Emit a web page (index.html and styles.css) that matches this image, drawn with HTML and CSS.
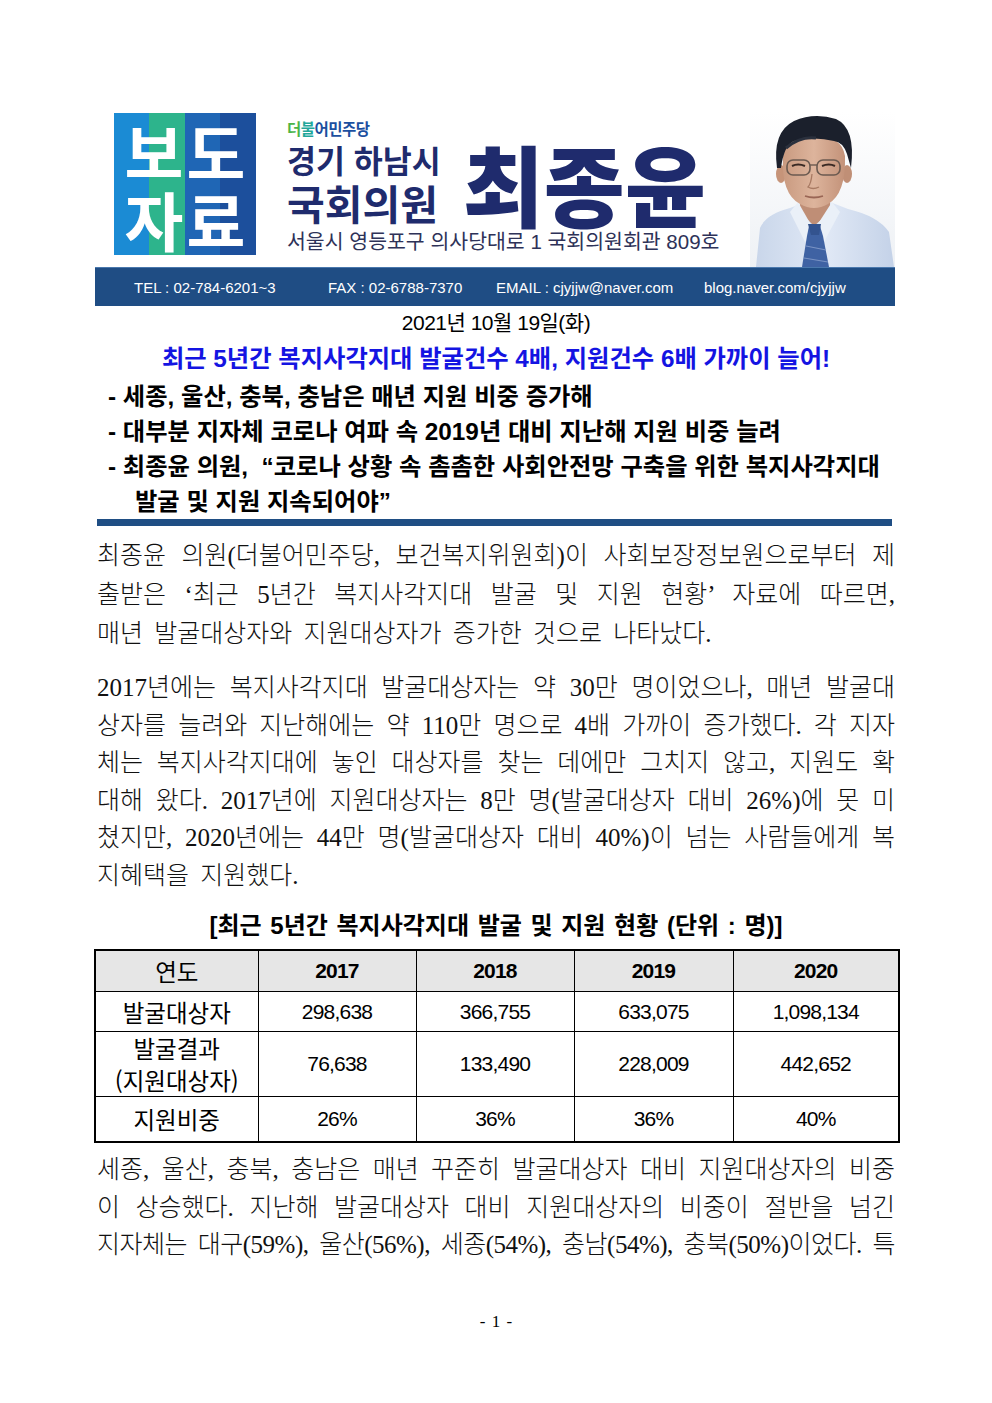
FILE: index.html
```html
<!DOCTYPE html>
<html lang="ko">
<head>
<meta charset="utf-8">
<title>보도자료 - 최종윤 의원</title>
<link rel="stylesheet" href="styles.css">
</head>
<body>
<div class="page">
  <header class="header">
    <div class="logo">
      <div class="logo-row">보도</div>
      <div class="logo-row">자료</div>
    </div>
    <div class="info">
      <div class="party"><span class="g1">더</span><span class="g2">불</span>어민주당</div>
      <div class="names">
        <div class="region">
          <div class="r1">경기 하남시</div>
          <div class="r2">국회의원</div>
        </div>
        <div class="big">최종윤</div>
      </div>
      <div class="addr">서울시 영등포구 의사당대로 1 국회의원회관 809호</div>
    </div>
    <div class="photo">
      <svg viewBox="0 0 145 155" width="145" height="155" aria-hidden="true">
        <defs>
          <linearGradient id="bg" x1="0" y1="0" x2="0" y2="1">
            <stop offset="0" stop-color="#ffffff"/>
            <stop offset="1" stop-color="#eef1f5"/>
          </linearGradient>
          <linearGradient id="shirt" x1="0" y1="0" x2="1" y2="0">
            <stop offset="0" stop-color="#c9d6ea"/>
            <stop offset="0.5" stop-color="#e1e9f6"/>
            <stop offset="1" stop-color="#c4d2e8"/>
          </linearGradient>
          <linearGradient id="face" x1="0" y1="0" x2="1" y2="0">
            <stop offset="0" stop-color="#c99a80"/>
            <stop offset="0.5" stop-color="#ddb49c"/>
            <stop offset="1" stop-color="#c39279"/>
          </linearGradient>
        </defs>
        <rect width="145" height="155" fill="url(#bg)"/>
        <path d="M6 155 L10 116 Q16 102 40 96 L56 90 L80 90 L98 97 Q128 104 139 120 L144 155 Z" fill="url(#shirt)"/>
        <path d="M50 76 L50 100 L64 114 L80 100 L80 76 Z" fill="#bf8e76"/>
        <path d="M48 90 L64 118 L55 130 L40 100 Z" fill="#eaf0f8"/>
        <path d="M82 90 L64 118 L74 130 L90 100 Z" fill="#eaf0f8"/>
        <path d="M59 114 L70 114 L73 124 L79 155 L52 155 L57 124 Z" fill="#3f62a3"/>
        <path d="M58 112 L71 112 L69 123 L61 123 Z" fill="#33538f"/>
        <path d="M56 134 L76 138 M54 146 L78 150" stroke="#7a93c4" stroke-width="1.2"/>
        <ellipse cx="31" cy="62" rx="5" ry="9" fill="#c69479"/>
        <ellipse cx="97" cy="62" rx="5" ry="9" fill="#c08f76"/>
        <path d="M33 44 Q31 82 50 92 Q64 100 78 92 Q96 82 95 44 Q92 24 64 23 Q36 24 33 44 Z" fill="url(#face)"/>
        <path d="M27 56 Q22 20 44 9 Q64 0 86 7 Q106 16 101 56 L97 42 Q93 30 84 29 Q64 24 44 29 Q34 33 31 56 Z" fill="#1b202c"/>
        <path d="M36 36 Q50 24 66 26" stroke="#2a303d" stroke-width="3" fill="none"/>
        <rect x="37" y="48" width="23" height="15" rx="6" fill="none" stroke="#6b5a50" stroke-width="1.6"/>
        <rect x="67" y="48" width="23" height="15" rx="6" fill="none" stroke="#6b5a50" stroke-width="1.6"/>
        <path d="M60 53 L67 53" stroke="#6b5a50" stroke-width="1.4"/>
        <path d="M42 54 Q48 51 55 54" stroke="#3a2a24" stroke-width="2" fill="none"/>
        <path d="M72 54 Q79 51 85 54" stroke="#3a2a24" stroke-width="2" fill="none"/>
        <path d="M62 62 Q61 72 58 75 Q63 78 69 75" stroke="#a97a63" stroke-width="1.3" fill="none"/>
        <path d="M55 84 Q64 87 73 84" stroke="#9a6655" stroke-width="1.8" fill="none"/>
      </svg>
    </div>
  </header>

  <div class="bar">
    <span class="c-tel">TEL : 02-784-6201~3</span>
    <span class="c-fax">FAX : 02-6788-7370</span>
    <span class="c-mail">EMAIL : cjyjjw@naver.com</span>
    <span class="c-blog">blog.naver.com/cjyjjw</span>
  </div>

  <div class="date">2021년 10월 19일(화)</div>

  <h1 class="title">최근 5년간 복지사각지대 발굴건수 4배, 지원건수 6배 가까이 늘어!</h1>

  <ul class="bullets">
    <li>- 세종, 울산, 충북, 충남은 매년 지원 비중 증가해</li>
    <li>- 대부분 지자체 코로나 여파 속 2019년 대비 지난해 지원 비중 늘려</li>
    <li>- 최종윤 의원, &nbsp;“코로나 상황 속 촘촘한 사회안전망 구축을 위한 복지사각지대</li>
    <li class="cont">발굴 및 지원 지속되어야”</li>
  </ul>

  <div class="rule"></div>

  <div class="text p1">
    <div class="ln">최종윤 의원(더불어민주당, 보건복지위원회)이 사회보장정보원으로부터 제</div>
    <div class="ln">출받은 ‘최근 5년간 복지사각지대 발굴 및 지원 현황’ 자료에 따르면,</div>
    <div class="ln end">매년 발굴대상자와 지원대상자가 증가한 것으로 나타났다.</div>
  </div>

  <div class="text p2">
    <div class="ln">2017년에는 복지사각지대 발굴대상자는 약 30만 명이었으나, 매년 발굴대</div>
    <div class="ln">상자를 늘려와 지난해에는 약 110만 명으로 4배 가까이 증가했다. 각 지자</div>
    <div class="ln">체는 복지사각지대에 놓인 대상자를 찾는 데에만 그치지 않고, 지원도 확</div>
    <div class="ln">대해 왔다. 2017년에 지원대상자는 8만 명(발굴대상자 대비 26%)에 못 미</div>
    <div class="ln">쳤지만, 2020년에는 44만 명(발굴대상자 대비 40%)이 넘는 사람들에게 복</div>
    <div class="ln end">지혜택을 지원했다.</div>
  </div>

  <div class="caption">[최근 5년간 복지사각지대 발굴 및 지원 현황 (단위 : 명)]</div>

  <table class="stats">
    <colgroup>
      <col class="w1"><col class="w2"><col class="w3"><col class="w4"><col class="w5">
    </colgroup>
    <tr class="head">
      <th class="lbl">연도</th>
      <th>2017</th>
      <th>2018</th>
      <th>2019</th>
      <th>2020</th>
    </tr>
    <tr class="r-a">
      <td class="lbl">발굴대상자</td>
      <td>298,638</td>
      <td>366,755</td>
      <td>633,075</td>
      <td>1,098,134</td>
    </tr>
    <tr class="r-b">
      <td class="lbl">발굴결과<br>(지원대상자)</td>
      <td>76,638</td>
      <td>133,490</td>
      <td>228,009</td>
      <td>442,652</td>
    </tr>
    <tr class="r-c">
      <td class="lbl">지원비중</td>
      <td>26%</td>
      <td>36%</td>
      <td>36%</td>
      <td>40%</td>
    </tr>
  </table>

  <div class="text p3">
    <div class="ln">세종, 울산, 충북, 충남은 매년 꾸준히 발굴대상자 대비 지원대상자의 비중</div>
    <div class="ln">이 상승했다. 지난해 발굴대상자 대비 지원대상자의 비중이 절반을 넘긴</div>
    <div class="ln tight">지자체는 대구(59%), 울산(56%), 세종(54%), 충남(54%), 충북(50%)이었다. 특</div>
  </div>

  <div class="pageno">- 1 -</div>
</div>
</body>
</html>
```

FILE: styles.css
```css
html, body {
  margin: 0;
  padding: 0;
  background: #ffffff;
}

body {
  color: #000000;
  font-family: "Liberation Sans", "Noto Sans CJK KR", sans-serif;
}

.page {
  width: 804px;
  margin-left: 94px;
  padding-top: 112px;
}

/* ---------- header ---------- */
.header {
  display: flex;
  align-items: flex-start;
  height: 155px;
}

.logo {
  width: 142px;
  height: 142px;
  margin-left: 20px;
  margin-top: 1px;
  background: linear-gradient(90deg,
    #1b8bd4 0 25%,
    #2db48c 25% 50%,
    #1f66b5 50% 75%,
    #1c4f9c 75% 100%);
  display: flex;
  flex-direction: column;
  justify-content: center;
  align-items: center;
  color: #ffffff;
  font-family: "Noto Sans CJK KR", sans-serif;
  font-weight: 700;
}

.logo-row {
  font-size: 64px;
  line-height: 68px;
  letter-spacing: 3px;
  padding-left: 3px;
}

.info {
  margin-left: 31px;
  width: 463px;
  font-family: "Noto Sans CJK KR", sans-serif;
}

.party {
  margin-top: 7px;
  font-size: 15.5px;
  line-height: 18px;
  font-weight: 700;
  color: #1c4fa0;
  letter-spacing: -0.5px;
}

.party .g1 { color: #4cb548; }
.party .g2 { color: #22a79a; }

.names {
  display: flex;
  align-items: center;
  margin-top: 2px;
  height: 86px;
  color: #1f2b6d;
}

.region {
  display: flex;
  flex-direction: column;
  font-weight: 700;
}

.r1 {
  font-size: 31.5px;
  line-height: 40px;
}

.r2 {
  font-size: 41px;
  line-height: 46px;
}

.big {
  margin-left: 22px;
  font-size: 88px;
  line-height: 86px;
  font-weight: 900;
}

.addr {
  margin-top: 2px;
  font-family: "Liberation Sans", "Noto Sans CJK KR", sans-serif;
  font-size: 20.5px;
  line-height: 30px;
  color: #2e3258;
  white-space: nowrap;
}

.photo {
  margin-left: auto;
  margin-right: 3px;
  width: 145px;
  height: 155px;
}

.photo svg {
  display: block;
}

/* ---------- contact bar ---------- */
.bar {
  margin-left: 1px;
  width: 800px;
  height: 39px;
  box-sizing: border-box;
  border-top: 1px solid #4a78ad;
  background: #1f4d84;
  display: flex;
  align-items: center;
  padding-left: 39px;
  color: #ffffff;
  font-size: 15px;
}

.c-tel { width: 194px; }
.c-fax { width: 168px; }
.c-mail { width: 208px; }

/* ---------- headings ---------- */
.date {
  height: 33px;
  line-height: 33px;
  text-align: center;
  font-family: "Liberation Sans", "Noto Sans CJK KR", sans-serif;
  font-size: 21px;
  letter-spacing: -0.5px;
}

.title {
  margin: 0;
  height: 40px;
  line-height: 40px;
  text-align: center;
  font-family: "Liberation Sans", "Noto Sans CJK KR", sans-serif;
  font-size: 24.3px;
  font-weight: 700;
  color: #1414e2;
  white-space: nowrap;
}

.bullets {
  list-style: none;
  margin: 0;
  padding: 0 0 0 14px;
  font-family: "Liberation Sans", "Noto Sans CJK KR", sans-serif;
  font-size: 24.3px;
  font-weight: 700;
  line-height: 35px;
  white-space: nowrap;
}

.bullets li {
  height: 35px;
}

.bullets .cont {
  padding-left: 27px;
}

.rule {
  margin-left: 3px;
  width: 795px;
  height: 7px;
  background: #1f4e84;
}

/* ---------- body text ---------- */
.text {
  margin-left: 3px;
  width: 798px;
  font-family: "Liberation Serif", "Noto Sans CJK KR", serif;
  font-size: 25px;
  font-weight: 300;
  color: #111111;
}

.ln {
  text-align: justify;
  text-align-last: justify;
}

.ln.end {
  text-align-last: left;
  word-spacing: 5px;
}

.ln.tight {
  letter-spacing: -0.5px;
}

.p1 {
  margin-top: 10px;
  line-height: 39px;
}

.p2 {
  margin-top: 16px;
  line-height: 37.5px;
}

.p3 {
  margin-top: 8px;
  line-height: 37.5px;
}

.caption {
  margin-top: 14px;
  height: 36px;
  line-height: 36px;
  text-align: center;
  font-family: "Liberation Sans", "Noto Sans CJK KR", sans-serif;
  font-size: 24px;
  font-weight: 700;
  word-spacing: 2px;
}

/* ---------- table ---------- */
.stats {
  margin-top: 5px;
  width: 804px;
  border-collapse: collapse;
  border: 2px solid #000000;
  table-layout: fixed;
  font-family: "Liberation Sans", "Noto Sans CJK KR", sans-serif;
  font-size: 21px;
}

.stats .w1 { width: 163px; }
.stats .w2 { width: 158px; }
.stats .w3 { width: 158px; }
.stats .w4 { width: 159px; }
.stats .w5 { width: 166px; }

.stats th,
.stats td {
  border: 1px solid #000000;
  text-align: center;
  vertical-align: middle;
  padding: 0;
  letter-spacing: -0.8px;
}

.stats .lbl {
  font-family: "Noto Sans CJK KR", sans-serif;
  font-size: 23.5px;
  font-weight: 400;
  line-height: 32px;
  letter-spacing: 0;
}

.stats .head th {
  background: #e6e6e6;
  height: 40px;
  font-weight: 700;
}

.stats .head th.lbl {
  font-weight: 400;
}

.stats .r-a td { height: 39px; }
.stats .r-b td { height: 64px; }
.stats .r-c td { height: 44px; }

.pageno {
  margin-top: 46px;
  text-align: center;
  font-family: "Liberation Serif", serif;
  font-size: 17px;
  line-height: 24px;
  word-spacing: 2px;
}
```
